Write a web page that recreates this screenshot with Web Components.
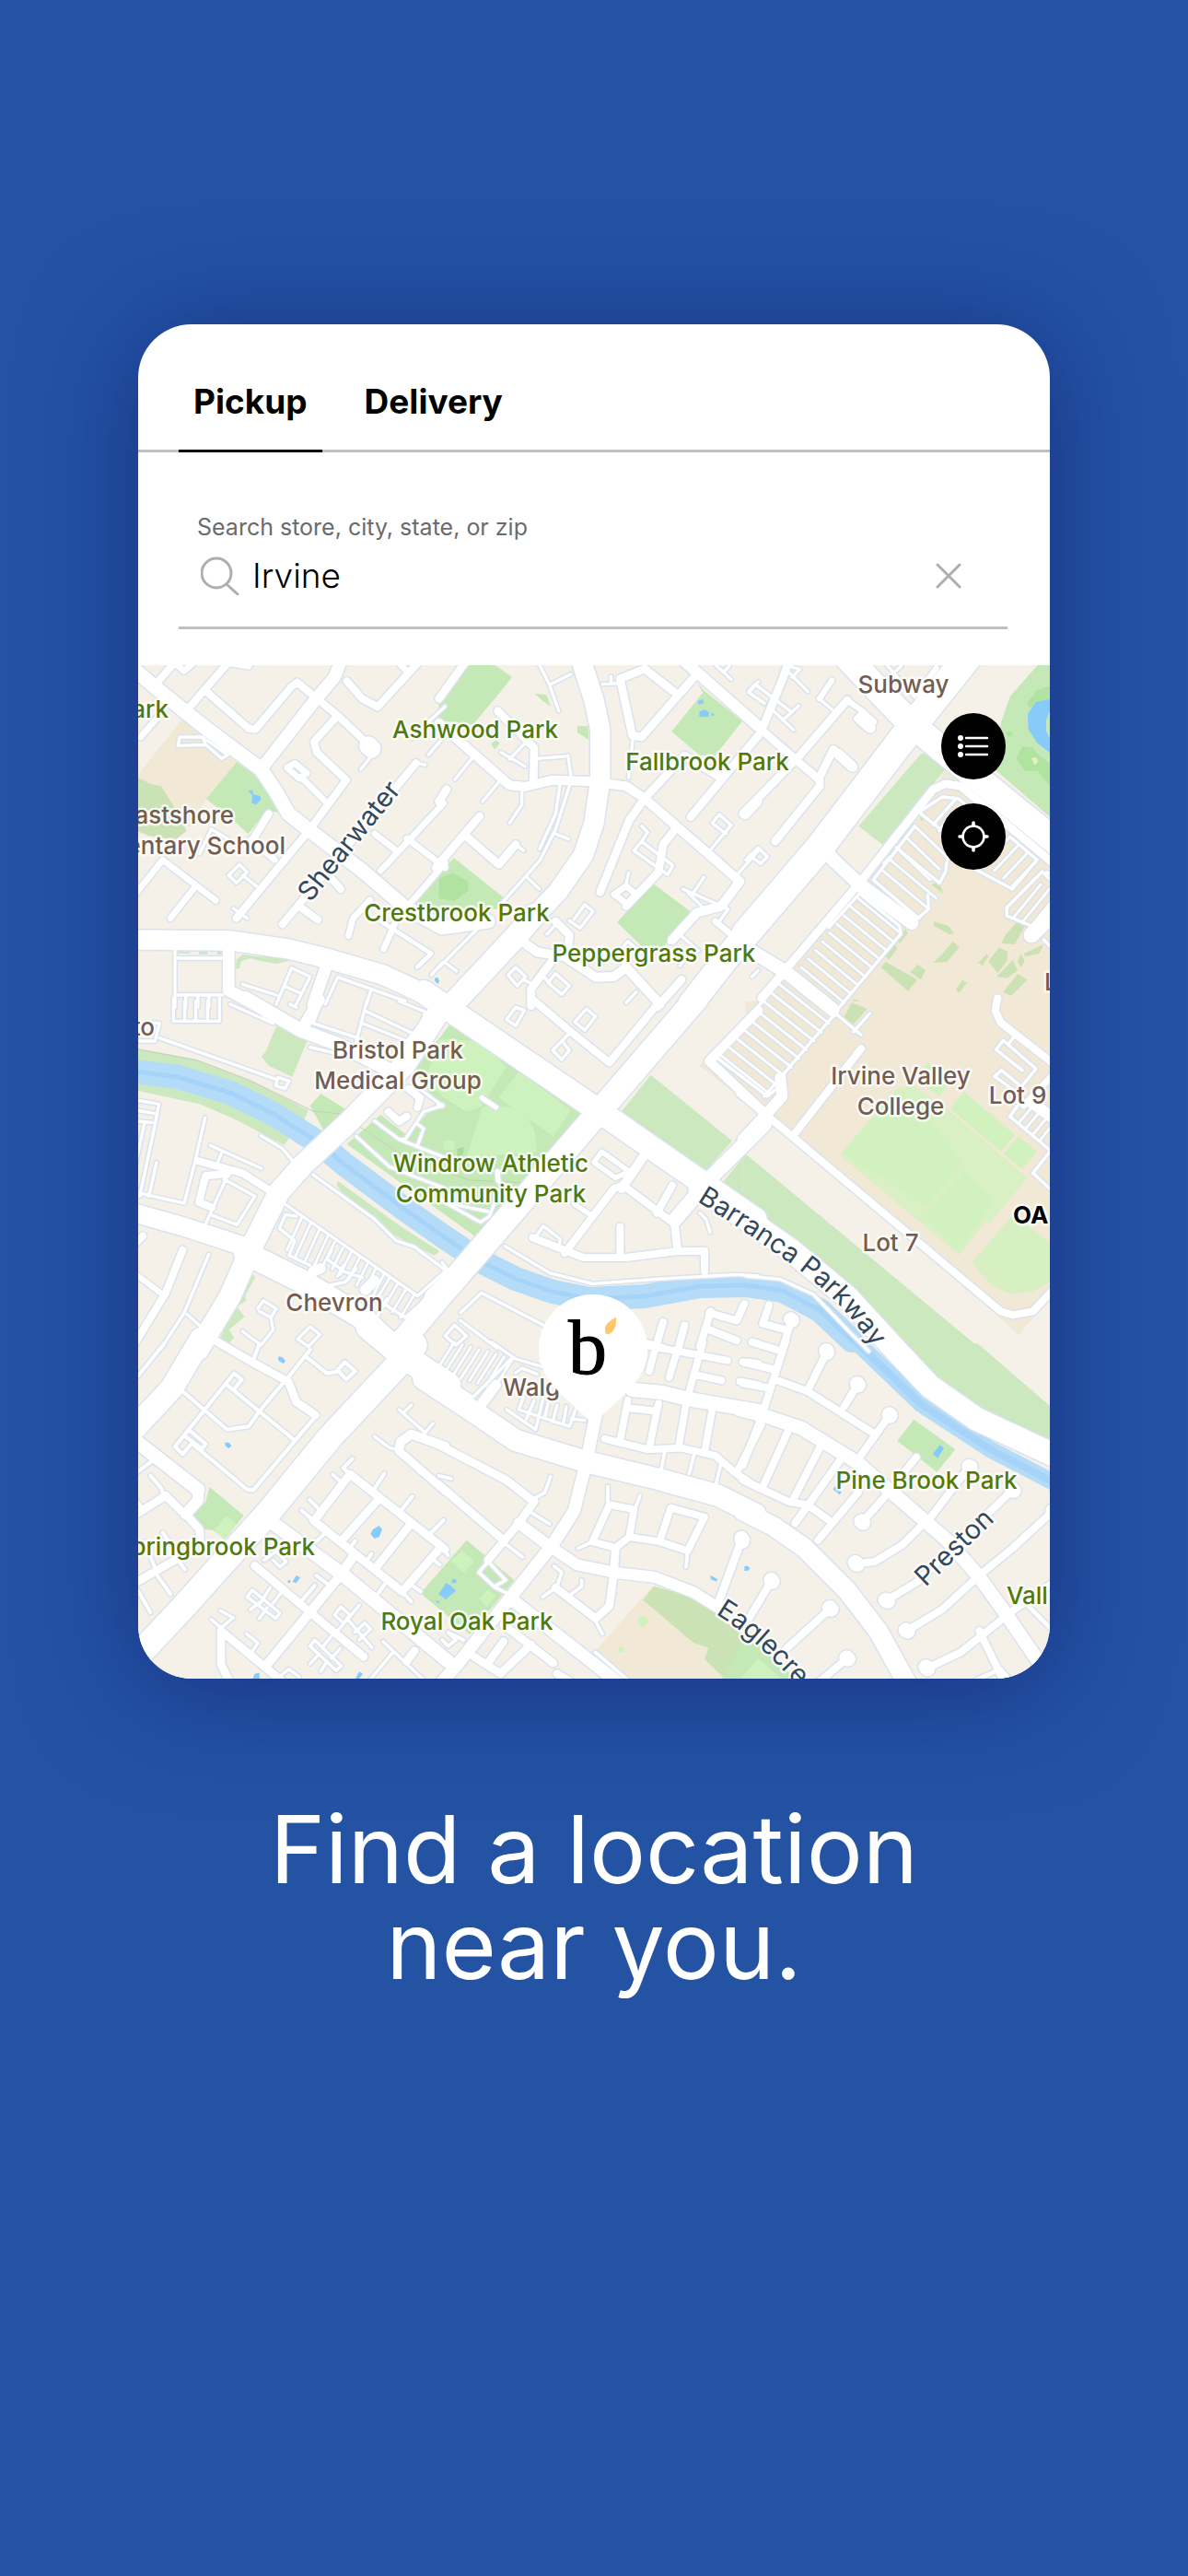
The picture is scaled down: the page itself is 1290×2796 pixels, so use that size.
<!DOCTYPE html>
<html lang="en">
<head>
<meta charset="utf-8">
<meta name="viewport" content="width=device-width, initial-scale=1">
<title>Find a location near you</title>
<style>
  html { background: #2453a4; }
  body { margin: 0; font-family: Inter, "Open Sans", sans-serif; }
</style>
</head>
<body>
<promo-screen>
  <location-card>
    <mode-tabs selected="Pickup" modes="Pickup,Delivery"></mode-tabs>
    <place-search label="Search store, city, state, or zip" value="Irvine"></place-search>
    <store-map>
      <map-button slot="tools" label="Show list" icon="list"></map-button>
      <map-button slot="tools" label="Use my location" icon="locate"></map-button>
    </store-map>
  </location-card>
  <span slot="headline">Find a location<br>near you.</span>
</promo-screen>

<script>
// Survey sheets. Each sheet has its own origin on the map and is drawn at 3 units per pixel.
// land: [fill, path], roads: [width, path]
const SHEETS = [
  {
    x: 140, y: 720,
    land: [
      ['#f1e8d6', 'M175 180 350 322 250 445 200 530 0 560 0 400z'],
      ['#cbe2b4', 'M20 368 70 392 105 400 140 455 188 545 150 575 60 560 20 540z'],
      ['#c5e8b7', 'M350 322 430 375 460 415 492 487 450 480 388 555 340 510 252 442z'],
      ['#87cbfb', 'M388 415 403 413 405 427 428 432 430 443 415 460 400 455 402 430z'],
      ['#c5e8b7', 'M1020 680 970 735 930 790 1020 800zM1010 150 1030 130 1030 170z'],
      ['#b0e3a0', 'M1020 735 980 745 980 765 1020 770z'],
      ['#cce8bf', 'M348 995 350 965 370 948 420 955 470 955 525 968 480 978 430 970 395 960 365 970 360 992zM228 938h27v10h-27zM288 938h14v10h-14zM160 938h40v6h-40z'],
      ['#87cbfb', 'M996 1025 1005 1022 1012 1035 1006 1043 997 1036z']
    ],
    roads: [
      [46, 'M-30 -20 100 90 230 195 430 345 480 420 520 490 590 545 760 675 900 795 1020 860 1170 840'],
      [64, 'M-10 900 330 903 520 930 660 965 830 1015 1030 1108'],
      [40, 'M430 345 610 115 670 45 695 -20'],
      [24, 'M200 140 330 -10M90 65 155 -10M250 90 390 212 412 215 530 75 548 62 680 170 765 250M680 170 603 255 612 290 708 380 590 540M710 58 760 115 810 142 940 0M935 325 500 850M560 795 615 835M590 540 350 830M455 490 400 580M650 690 690 735'],
      [20, 'M870 -10 910 30M515 340 540 325 580 358 555 375zM560 370 645 455M110 640 10 765M110 640 283 772M210 735 135 830M395 575 475 640M800 555 865 605M1025 455 820 675M905 570 1030 665M1030 650 905 795M785 770 730 830 715 887M865 850 830 930M150 0 180 25 220 -10M90 180 38 240M330 0 390 10 400 -10'],
      [60, 'M780 268 790 278'],
      [10, 'M800 290 755 345M935 325 965 330M340 798 385 830M325 690 360 655 385 680 350 715zM370 690 415 725M975 298 1030 235M1030 140 960 205 920 245M165 240 240 240 322 298 302 310 250 265 160 268zM240 240 250 265M230 620 268 540 320 570M150 935V1120M155 960H305M150 1080H305M185 1080V1120M225 1080V1120M260 1080V1120M480 1110 530 992 590 1020 545 1110M505 1050 560 1075M370 1045 480 1080M640 1110 680 1022 900 1100M790 1060 770 1120M985 1015 1020 975'],
      [38, 'M325 930V1065L390 1100M645 980 600 1110'],
      [14, 'M820 840 985 945 940 988']
    ]
  },
  {
    x: 480, y: 720,
    land: [
      ['#c5e8b7', 'M85 0 165 0 228 45 180 105 100 200 -10 185 -10 130z'],
      ['#c5e8b7', 'M302 98 340 103 354 140 325 120zM441 205 475 205 478 250 441 225zM160 262 175 250 188 260 172 280z'],
      ['#c5e8b7', 'M832 65 855 90 978 188 890 300 840 300 748 222 850 95z'],
      ['#87cbfb', 'M833 122 850 117 853 130 835 134zM838 158 855 150 870 160 868 175 838 173zM877 160 890 168 877 172z'],
      ['#c5e8b7', 'M38 633 200 762 180 800 -90 795 -90 790z'],
      ['#b0e3a0', 'M-10 700 35 683 85 710 85 740 40 775 -10 765z'],
      ['#c5e8b7', 'M687 716 808 808 720 925 660 930 570 843z']
    ],
    roads: [
      [64, 'M450 -20 495 120 515 215 515 380 495 520 460 625 380 740 240 890'],
      [74, 'M300 820 240 890 20 1125'],
      [30, 'M-10 195 220 397 270 402 360 380 490 385 600 400 660 440 970 710 910 790 830 812 750 900M240 890 310 940 400 955 500 1022 560 1020 600 990 710 1110'],
      [26, 'M-10 115 80 -10M182 155 300 275 298 385M122 498 -20 665M75 560 185 655 240 590M15 410 -10 450M660 440 610 510 515 745M660 440 790 300 905 370M1030 235 810 500M1030 450 988 495M580 50 660 18 765 100M580 50 620 235 650 240 830 35M760 540 720 590 705 680 600 790M370 840 415 885 410 930M365 960 290 1060 290 1115M780 1030 700 1120'],
      [36, 'M780 -15 1030 205'],
      [20, 'M560 752 600 725 635 755 605 785zM890 840 938 880'],
      [10, 'M350 70 420 35M310 -10 350 70 380 155M310 310 400 303M410 300 422 380M192 290 270 335M270 260 220 312M105 300 42 378M190 380 132 450M260 410V460L220 520M385 390 370 490 318 604M415 400 370 540 320 640 200 775M370 555 412 572M275 695 317 735M240 590 266 610M523 68 575 65M550 42V65M622 240 608 372M880 -5 942 52M935 10 920 25M600 715 608 682M650 530 670 550 650 580 752 658 735 688 625 610 650 580M870 612 942 527 903 492 880 520 925 555M960 690 1030 610M785 735 932 800 900 845M853 697 820 745M845 790 800 745M740 910 770 880 835 935M775 985 800 950M342 882 370 850M430 833 465 785 492 808 450 862 415 838M590 975 580 935 605 905 635 930M130 850 -10 990M15 978 47 1002M240 990 272 1020 245 1050 215 1015zM265 1030 295 1045M370 1010 415 1050 390 1078 345 1040zM330 1020 350 1040M632 1070 600 1105M1030 60 1000 95 1020 110M1030 1000 1010 1020']
    ]
  },
  {
    x: 810, y: 720,
    land: [
      ['#f1e8d6', 'M650 345 740 405 990 600V1120H60L120 1000 620 400z'],
      ['#cce8bf', 'M570 295 605 293 650 345 445 590 367 530z'],
      ['#c5e8b7', 'M990 0 950 6 860 108 832 190 805 340 990 500z'],
      ['#b0e3a0', 'M990 75 950 85 915 130 925 145 990 120zM900 270 935 275 955 300 990 325V400L950 350 910 350 880 310zM850 222 868 222 866 238 850 236z'],
      ['#87cbfb', 'M990 117 945 125 918 165 920 215 950 260 990 292z'],
      ['#c5e8b7', 'M990 155 978 185 978 220 990 245z'],
      ['#e7efc0', 'M930 310 945 305 952 320 940 332z'],
      ['#cbe2b4', 'M612 840 660 855 678 880 662 882 612 855zM675 905 695 925 655 972 610 975 640 945zM520 865 527 880 500 912 490 900zM485 915 492 930 465 965 455 955zM455 972 558 1030 528 1068 440 990zM560 980 585 1000 570 1030 535 1005zM705 1032 720 1040 695 1072 683 1062zM785 945 790 955 770 985 757 975zM825 925 853 940 850 970 820 1008 790 970zM880 845 912 850 875 915 832 912 845 885zM970 915 955 945 910 955 905 945zM895 945 908 970 895 990 885 970zM870 965 885 1000 850 1025 817 1020zM885 1012 917 1030 865 1082 838 1070zM630 710 642 750 605 720zM565 500 580 505 573 515zM350 1093 382 1105 345 1115z']
    ],
    roads: [
      [92, 'M730 -30 530 220 240 600 0 880'],
      [82, 'M0 880 -180 1110'],
      [84, 'M310 -40 530 190 620 265 1020 590'],
      [26, 'M50 1090 370 715 610 410 650 392 700 400 1000 650M140 -10 120 50 50 220M-10 165 240 380 240 400 95 580M-10 490 175 300 330 120M240 370 285 280 350 340'],
      [44, 'M240 590 290 645 370 720 540 845M-10 920 130 1005 280 1125'],
      [34, 'M300 295 345 335M375 185 405 210'],
      [18, 'M330 120 385 160M360 180 400 215 418 190 380 158zM280 55 240 115M620 15 560 100'],
      [10, 'M10 90 30 68 150 160M10 95 60 130M172 138 120 185M85 150 155 217M235 112 280 150M140 30 202 92M145 10 175 20 150 45M0 640 40 600 70 630 48 652 12 625M450 -5 550 110M505 10 465 45M270 860 370 750 500 855 505 880 300 1125M415 705 550 530M415 705 560 830 595 800 592 755M545 840 560 830M450 650 470 630M490 600 630 715 650 680 655 640M570 480 640 435 690 440 710 455M570 490 640 545M610 525 685 440M630 545 660 500M750 672 868 735 948 640 860 565M850 822 930 855 M850 822V795L965 678 1000 712M980 680 1000 690M970 900 1000 930'],
      [50, 'M930 885 1000 815']
    ],
    hatch: [
      [180, 990, 365, 765, 140, 115, 9],
      [415, 705, 470, 640, 150, 125, 3],
      [490, 600, 550, 530, 110, 105, 3],
      [860, 565, 948, 640, -80, 85, 4],
      [870, 830, 930, 855, 90, -110, 3]
    ]
  },
  {
    x: 140, y: 1090,
    land: [
      ['#cce8bf', 'M20 143 210 178 400 250 585 345 570 375 505 458 450 430 340 372 230 325 20 280z'],
      ['#cce8bf', 'M485 60 580 120 532 236 455 200 432 170 445 155z'],
      ['#c5e8b7', 'M625 292 728 355 645 430 590 330z'],
      ['#cce8bf', 'M680 575 880 720 1012 805 995 818 860 750 720 650 678 590z'],
      ['#cce8bf', 'M395 872 412 888 378 950 383 965 352 985 377 1018 325 1060 343 1085 325 1105 298 1085z']
    ],
    roads: [
      [70, 'M1000 40 900 195 720 380 570 520 490 610 400 790 330 950 225 1125'],
      [60, 'M-10 672 180 725 380 790'],
      [76, 'M380 810 560 900 760 1020 890 1150M1040 920 880 1110'],
      [44, 'M380 -20 560 85 680 130 850 215'],
      [36, 'M570 70 620 -15'],
      [24, 'M225 510 370 550 480 620M320 553 250 558 228 645 270 662M175 800 120 940 10 1120M910 275 948 305 940 335M845 350 880 382 905 365M20 780 45 755'],
      [18, 'M10 870 110 945'],
      [34, 'M600 870 625 860M770 930 800 900'],
      [10, 'M248 370 215 515 180 648 20 612M265 460 432 535M302 485 285 525M20 312 98 325 75 440 35 625M20 345 82 355M20 380 75 385M50 390 20 530M90 515 65 625M430 428 500 470 548 527M320 560 250 715M310 570 410 625 352 718 265 685M600 555 800 700 870 770 930 790 1030 865M500 645 940 950 1030 870M545 690 510 685 490 730 540 770 522 818 590 850M590 140 800 190 835 225M740 320 800 262M800 380 880 440 900 440 960 350 1020 330 940 270M880 440 1030 500M940 460 960 405 940 390M740 430 850 530 1030 600M600 62 628 -10M600 62 745 110M775 -10 740 125M770 22 925 95M755 60 905 120M880 -10 965 25 955 60 905 120M330 0 470 62M440 40 462 18M145 -20V55H295V-20M182 -10V55M218 -10V55M256 -10V55M35 120 85 120 100 62 60 60M100 110 480 245M485 238 522 250 508 275 478 265zM260 815 180 1005 105 1120M190 1010 240 1055M420 990 438 965 480 992 462 1020 425 1000M462 1020 470 1060 430 1110 370 1065M590 1050 622 1075 585 1115 550 1090zM655 915 705 905 740 860M660 800 645 830 700 870 760 890M680 885 700 850M830 975 900 1020 940 985M810 1015 840 960M525 0 545 10']
    ],
    hatch: [
      [565, 690, 650, 750, -50, 110, 4],
      [670, 775, 830, 880, -35, 70, 7],
      [850, 890, 930, 945, -45, 75, 4]
    ]
  },
  {
    x: 480, y: 1090,
    land: [
      ['#c5e8b7', 'M30 60 460 355 120 765 -310 455 -200 360 -110 430 -20 320 -90 215z'],
      ['#cef2bd', 'M-10 115 130 120 210 205 125 335 80 350 0 300 -50 230zM250 220 420 345 362 430 185 305zM130 335 Q310 310 308 480 L80 500zM5 445h35v30H5z'],
      ['#a8dd98', 'M50 470 72 465 68 490 48 500z'],
      ['#f1e8d6', 'M1030 0 900 130 838 200 1030 350z'],
      ['#cce8bf', 'M680 230 945 445 862 540 835 535 583 352zM990 488 1020 505V680L905 592z']
    ],
    roads: [
      [76, 'M-60 -40 500 340 860 590 1020 700'],
      [78, 'M830 -20 520 340 270 630 20 920 -20 960'],
      [24, 'M290 -20 420 90 545 190 710 -10M400 810 560 600 590 590 750 710M700 680 750 590M295 760 460 825 600 825 760 805 855 803V870M580 725V820M870 1005 960 1030 985 975M875 1000 840 1115M870 1060 960 1095M720 1035 695 1120M790 1045 770 1120'],
      [30, 'M585 600 660 490M1030 20 870 185 1040 345'],
      [48, 'M760 700 880 560 1050 390'],
      [26, 'M757 710 767 800M650 1100 720 1120'],
      [16, 'M495 515 520 480 610 545 565 565zM430 650 490 690M130 305 175 335M-10 330 0 330M180 545 183 575'],
      [10, 'M412 98 360 150 390 180 415 150 395 125M240 10 210 50 240 70 268 20zM470 15 500 40 465 85 432 58zM310 750 330 722 385 765 380 790M840 680 860 700 873 742M205 788 350 875 490 910 700 895 960 880 1030 885M60 1005 128 940 330 1045M60 1030 180 1120M0 640 125 710 155 690 170 650M30 650 150 675M0 840 30 880M10 1080 40 1045 80 1080 45 1110z']
    ]
  },
  {
    x: 810, y: 1090,
    land: [
      ['#f1e8d6', 'M0 -10H990V925L935 1020 888 1077 820 1015 70 370 -10 300z'],
      ['#cbe2b4', 'M345 -5 395 15 350 65 318 45z'],
      ['#f5f0e8', 'M70 375 820 1015 888 1077 935 1020 990 960V1120H485L-10 650V480z'],
      ['#cce8bf', 'M-10 480 750 1110H485L330 930 130 760-10 640z'],
      ['#f1e8d6', 'M820 1005 888 1077 945 1010z'],
      ['#d8f0c3', 'M305 490 490 275 545 265 660 345 917 565 795 712 780 708 695 817z'],
      ['#d1f2bf', 'M310 487 490 285 600 380 705 515 585 657 480 585zM712 545 808 638 690 800 582 688zM710 285 877 425 830 480 665 340zM888 430 947 480 900 537 838 488zM590 188 662 260 630 300 560 250z'],
      ['#d6f0c2', 'M870 685 990 775V905L930 937 862 943 800 915 760 870 737 840z']
    ],
    roads: [
      [24, 'M-20 290 150 430 830 1000 870 1012 935 1000 1010 920M160 420 375 145M820 -20 812 20 830 60 1010 200'],
      [36, 'M112 240 118 300 60 365 -10 440M250 -15 285 25M930 320 1000 370'],
      [24, 'M75 980 55 1040 130 1060M145 1040 120 1120M20 1100 100 1125'],
      [44, 'M145 1025 152 1030'],
      [10, 'M-100 170 140 -110M70 300 100 275M-100 170 70 300M300 20 60 300M280 20 375 100M403 30 350 90M815 148 838 118 945 210 880 290M815 148 900 215M870 110 855 130M810 235 832 215 900 270M810 235 880 285M860 365 990 475M860 365 900 310M935 550 990 480M935 550 1000 610M0 885 110 895 220 945 340 1070 400 1130'],
      [20, 'M1000 230 905 330']
    ],
    hatch: [
      [-90, 160, 130, -95, 165, 130, 10],
      [890, 385, 960, 440, 50, -60, 4]
    ]
  },
  {
    x: 140, y: 1460,
    land: [
      ['#c5e8b7', 'M263 462 374 555 312 632 275 602 245 600 210 552 250 510z'],
      ['#cef2bd', 'M318 555 350 583 310 632 278 600z'],
      ['#87cbfb', 'M487 37 500 40 510 52 503 60 487 50zM313 317 325 317 335 328 325 337 314 328zM795 600 815 588 825 600 815 625 800 630 787 615zM545 750 558 757 545 775 533 770zM518 766h8v8h-8zM410 1070 425 1067 425 1090H402zM750 1063 762 1070 750 1087H738z']
    ],
    roads: [
      [74, 'M235 -20 140 140 0 290'],
      [82, 'M930 0 880 60 655 300 450 550 180 850 30 1010M780 -60 900 40 1040 130'],
      [44, 'M20 310 225 470 M470 580 700 750 1040 1030'],
      [36, 'M225 470 225 505 185 550'],
      [26, 'M280 -15 410 60 520 120 545 185 608 228M185 550 230 600 232 640M10 560 120 490 170 540M410 718 590 870 765 1015M600 570 890 803M605 570 720 420 1030 665M690 640 815 500M800 730 920 580M890 803 1010 665M300 930 300 1040 335 1110M300 930 500 1095M930 995 905 1030M880 345 1030 475M10 780 150 700'],
      [30, 'M450 1040 680 760 730 690M880 340 885 315 920 290 1030 330'],
      [12, 'M425 -5 405 50M590 15 515 110M580 40 645 92 685 85M703 55 737 85 708 112 680 82zM505 120 425 215 390 265 320 275 178 153M320 130 540 310M345 140 368 112 342 92 320 120 150 330 175 355 205 320 385 470 405 472 610 230M195 275 250 322 238 338 185 298M115 -5 30 100M70 425 105 465 115 500M25 415 85 370M20 500 50 540M85 740 135 810M30 800 70 870M50 640 85 725M110 610 130 640M160 700 182 730M720 420 698 400 728 370M798 470 832 418M885 540 923 493M615 530 588 503M600 570 562 538M700 455 665 422M1025 570 970 625M980 690 1012 715M715 665 737 638M770 710 790 680M832 780 812 808M890 803 920 835M920 780 950 802M610 640 637 615M650 780 610 750M565 830 605 783'],
      [10, 'M880 210 965 285 990 255M900 215 920 195M800 298 850 335 880 340M960 35 1030 85M385 820 402 798 492 872 478 890zM440 700 480 672 512 705 492 722 470 700M460 790 425 845M395 862 425 838M425 890 450 855M497 805 470 840M590 980 605 960 692 1045 675 1060zM657 950 630 985M688 988 660 1020M590 1038 620 1005M625 1062 645 1030M670 880 690 852 720 878 700 905zM750 847 680 930M710 890 792 985M735 935 768 905 787 925 750 960M268 893 300 920 340 888 298 865M383 940 420 970 400 1000M490 1080 520 1055 555 1080M828 965 960 1090M860 1000 785 1090']
    ]
  },
  {
    x: 480, y: 1460,
    land: [
      ['#c5e8b7', 'M80 635 235 765 90 942 -70 808z'],
      ['#cef2bd', 'M65 668 105 705 70 742 30 702zM150 795 175 817 145 852 120 825zM50 862 80 890 85 920 55 915z'],
      ['#87cbfb', 'M12 775 28 782 45 800 30 812 12 828 -12 810 0 795zM32 763h14v12h-14zM-20 830 -8 835 -14 842zM875 750 897 762 895 770 875 762zM990 718 1002 724 995 735 987 730z'],
      ['#f1e8d6', 'M685 785 1000 970 915 1090H600L500 995z'],
      ['#cbe2b4', 'M690 785 820 820 1010 965 915 1080 855 1022 868 985 820 970 655 830z'],
      ['#c5e8b7', 'M1000 975 1030 950V1090H912z'],
      ['#cef2bd', 'M655 878 675 897 655 920 635 898zM575 985h16v14h-16zM1030 1030V1090H975z']
    ],
    roads: [
      [70, 'M-60 110 100 215 240 310 470 380 700 435 900 490 1020 550'],
      [46, 'M620 145 720 155 800 175 1030 215'],
      [40, 'M515 160 470 380 430 540 360 650 200 850 50 1040 -20 1120M230 830 600 1120'],
      [36, 'M250 580 350 655 440 715 560 740 690 755 820 805 900 855'],
      [26, 'M-10 325 210 440 300 510 250 580 150 700M-10 455 200 635M560 740 545 850 500 890 370 790M565 660 560 740M975 635 900 840M200 910 362 1035M200 965 150 1035M105 1015 190 1070 290 975M375 1070 440 1110'],
      [23, 'M675 85 700 -10M740 105 768 10M610 -10 930 50M820 95 910 115M850 -10 800 170M995 55 1030 60M970 118 1030 130M605 180 580 310M705 190 675 335M795 190 770 335M880 210 855 350M610 205 700 215M530 305 670 340 780 335 890 360 960 420 1030 465M1040 260 960 415M490 640 545 520 625 535 610 625 565 660zM610 625 710 640 800 670 855 560 745 530 710 635'],
      [46, 'M975 628 978 640'],
      [34, 'M175 130 130 190'],
      [11, 'M725 350 715 402M820 360 805 418M907 390 893 452M353 428 335 480 300 500M290 545 350 582M210 650 262 690M150 705 120 740 170 787 207 765 150 705M170 787 235 820M370 790 328 820M375 785 390 740 365 720M415 815 455 785V765M495 890 522 940M540 460V520M645 490 628 535M800 670 795 722M490 640 443 662M500 1000 610 1095M-10 425 30 435M0 660 20 685M20 935 45 960 20 980 0 960M30 940 70 960'],
      [10, 'M-10 95 70 150 100 170 230 40M160 -10 240 45 410 95M240 90 260 75 310 95M210 210 305 275 330 170M265 170 250 210 415 265 435 210M300 180 275 240M345 190 335 235M375 195 360 250M405 200 395 258M420 240 465 245']
    ],
    hatch: [
      [40, -10, 230, 45, -60, 95, 8]
    ]
  },
  {
    x: 810, y: 1460,
    land: [
      ['#cce8bf', 'M505 -5H755L990 198V322L730 182 600 85z'],
      ['#c5e8b7', 'M547 242 682 340 622 413 493 312z'],
      ['#87cbfb', 'M632 325 645 335 625 368 608 355zM290 460 312 478 305 487 284 470zM-5 720 12 724 10 733-5 735z'],
      ['#c5e8b7', 'M-10 965 40 950 160 1090H-80z'],
      ['#cef2bd', 'M40 1020 120 1090H-20z']
    ],
    roads: [
      [62, 'M-10 540 90 590 190 660 330 800 430 930 530 1110'],
      [44, 'M-20 210 60 230 180 270 360 380 580 570 660 640 760 755 850 880 980 1070'],
      [24, 'M-10 55 85 78M-10 125 75 140M130 -15 50 235 -10 390M90 110 200 150 420 290M200 150 262 25M320 200 363 130M360 380 468 228M555 365 510 420M595 570 728 395M460 485 380 575M570 590 510 650 420 705 358 712M870 470 560 770 460 830M1000 540 870 660 760 750 640 860 525 930M850 880 700 1000 590 1052M1000 775 840 885M760 930 830 1075M135 285 60 450M240 335 150 510M310 370 160 580M365 480 235 635M-10 440 140 510 200 520 270 570M85 765 10 890M275 858 130 990M330 1020 240 1095M-20 640 0 630'],
      [48, 'M262 18 264 24M363 126 366 130M467 226 470 230M727 395 731 398M376 574 381 578M356 708 362 714M455 830 462 834M866 468 872 474M521 928 527 932M586 1048 592 1054M82 765 86 770M273 855 278 860M328 1018 333 1022M1000 540 1005 550'],
      [14, 'M920 850 1000 930M750 1090 830 1055 860 1090']
    ]
  }
];

const CANAL = 'M140 1162 193 1169 250 1186 297 1209 347 1241 373 1263 440 1313 480 1341 520 1368 560 1388 600 1402 640 1410 700 1407 760 1396 810 1395 850 1401 890 1422 925 1455';
const CANAL_EAST = 'M890 1420 925 1452 1000 1524 1075 1573 1150 1612';
const BARRANCA = 'M760 1290 810 1323 860 1358 920 1408 975 1468 1010 1505 1060 1540 1150 1582';
const BARRANCA_LABEL = 'M757 1304 Q803 1332 862 1374 T956 1476';
const EAGLECREST_LABEL = 'M777 1752 Q822 1778 880 1846';

// [text, x, baseline, anchor, kind]
const LABELS = [
  ['ark', 183, 779, 'end', 'park'],
  ['Ashwood Park', 516, 801, 'middle', 'park'],
  ['Fallbrook Park', 768, 836, 'middle', 'park'],
  ['Crestbrook Park', 496, 1000, 'middle', 'park'],
  ['Peppergrass Park', 710, 1044, 'middle', 'park'],
  ['Windrow Athletic', 533, 1272, 'middle', 'park'],
  ['Community Park', 533, 1305, 'middle', 'park'],
  ['Pine Brook Park', 1006, 1616, 'middle', 'park'],
  ['pringbrook Park', 342, 1688, 'end', 'park'],
  ['Royal Oak Park', 507, 1769, 'middle', 'park'],
  ['Vall', 1093, 1741, 'start', 'park'],
  ['Subway', 981, 752, 'middle', 'poi'],
  ['astshore', 254, 894, 'end', 'poi'],
  ['entary School', 310, 927, 'end', 'poi'],
  ['to', 168, 1124, 'end', 'poi'],
  ['Bristol Park', 432, 1149, 'middle', 'poi'],
  ['Medical Group', 432, 1182, 'middle', 'poi'],
  ['Irvine Valley', 978, 1177, 'middle', 'poi'],
  ['College', 978, 1210, 'middle', 'poi'],
  ['Lot 9', 1105, 1198, 'middle', 'poi'],
  ['Lot 7', 967, 1358, 'middle', 'poi'],
  ['L', 1134, 1075, 'start', 'poi'],
  ['Chevron', 363, 1423, 'middle', 'poi'],
  ['Walg', 546, 1515, 'start', 'poi'],
  ['OA', 1100, 1328, 'start', 'city']
];

const hatchPath = ([x1, y1, x2, y2, dx, dy, n]) => {
  let d = '';
  for (let i = 0; i < n; i++) {
    const t = i / (n - 1);
    d += `M${Math.round(x1 + (x2 - x1) * t)} ${Math.round(y1 + (y2 - y1) * t)}l${dx} ${dy}`;
  }
  return d;
};

const onSheet = (sheet, content) =>
  `<g transform="translate(${sheet.x} ${sheet.y}) scale(${1 / 3})">${content}</g>`;

const landLayer = () => SHEETS.map(s =>
  onSheet(s, s.land.map(([fill, d]) => `<path fill="${fill}" d="${d}"/>`).join(''))).join('');

const roadLayer = (extra) => SHEETS.map(s => {
  const roads = s.roads.map(([w, d]) => `<path stroke-width="${w + extra}" d="${d}"/>`);
  (s.hatch || []).forEach(h => roads.push(`<path stroke-width="${8 + extra}" d="${hatchPath(h)}"/>`));
  return onSheet(s, roads.join(''));
}).join('');

const ICONS = {
  list: `<svg viewBox="0 0 34 24" width="34" height="24" fill="#fff" aria-hidden="true">
    <circle cx="3" cy="3" r="3"/><circle cx="3" cy="12" r="3"/><circle cx="3" cy="21" r="3"/>
    <path d="M9 3h23M9 12h23M9 21h23" stroke="#fff" stroke-width="2.4" stroke-linecap="round"/></svg>`,
  locate: `<svg viewBox="0 0 34 34" width="34" height="34" fill="none" stroke="#fff" aria-hidden="true">
    <circle cx="17" cy="17" r="11.5" stroke-width="2.6"/>
    <path d="M17 2V5M17 29v3M2 17H5M29 17h3" stroke-width="3.6" stroke-linecap="round"/></svg>`
};

class PromoScreen extends HTMLElement {
  constructor() {
    super();
    this.attachShadow({ mode: 'open' }).innerHTML = `
      <style>
        :host {
          display: flex;
          flex-direction: column;
          min-height: 100vh;
          box-sizing: border-box;
          padding: 352px 150px 0;
          background: #2453a4;
        }
        h1 {
          margin: 133px 0 0;
          color: #fff;
          font-size: 102px;
          line-height: 104px;
          font-weight: 400;
          text-align: center;
        }
      </style>
      <main><slot></slot></main>
      <h1><slot name="headline"></slot></h1>`;
  }
}

class LocationCard extends HTMLElement {
  constructor() {
    super();
    this.attachShadow({ mode: 'open' }).innerHTML = `
      <style>
        :host {
          display: flex;
          flex-direction: column;
          overflow: hidden;
          border-radius: 58px;
          background: #fff;
          box-shadow: 0 10px 120px rgba(18, 26, 112, .6);
        }
      </style>
      <slot></slot>`;
  }
}

class ModeTabs extends HTMLElement {
  constructor() {
    super();
    this.attachShadow({ mode: 'open' });
  }

  connectedCallback() {
    this.render();
  }

  render() {
    const selected = this.getAttribute('selected');
    const modes = this.getAttribute('modes').split(',');
    this.shadowRoot.innerHTML = `
      <style>
        :host {
          display: block;
          padding: 32px 44px 0;
          border-bottom: 3px solid #c0c0c0;
        }
        div { display: flex; gap: 30px; }
        button {
          height: 104px;
          margin: 0 0 -3px;
          padding: 0 16px;
          box-sizing: content-box;
          border: 0;
          border-bottom: 3px solid transparent;
          background: none;
          color: #000;
          font: 700 37px/104px Inter, sans-serif;
        }
        button[aria-selected="true"] { border-color: #000; }
      </style>
      <div role="tablist">
        ${modes.map(m => `<button type="button" role="tab" aria-selected="${m === selected}">${m}</button>`).join('')}
      </div>`;
    this.shadowRoot.querySelectorAll('button').forEach(button => {
      button.addEventListener('click', () => {
        this.setAttribute('selected', button.textContent);
        this.render();
      });
    });
  }
}

class PlaceSearch extends HTMLElement {
  constructor() {
    super();
    this.attachShadow({ mode: 'open' });
  }

  connectedCallback() {
    this.shadowRoot.innerHTML = `
      <style>
        :host {
          display: block;
          margin: 64px 46px 39px 44px;
          border-bottom: 3px solid #c0c0c0;
        }
        label {
          display: block;
          padding-left: 20px;
          color: #6b6b6b;
          font-size: 25px;
          line-height: 34px;
        }
        .row {
          display: flex;
          align-items: center;
          height: 72px;
          margin-bottom: 19px;
          padding: 0 46px 0 24px;
        }
        input {
          flex: 1;
          min-width: 0;
          height: 56px;
          margin-left: 14px;
          padding: 0;
          border: 0;
          outline: 0;
          background: none;
          color: #000;
          font: 300 37px/56px Inter, sans-serif;
        }
        button {
          display: flex;
          padding: 4px;
          border: 0;
          background: none;
        }
        svg {
          fill: none;
          stroke: #aeaeae;
          stroke-width: 3;
          stroke-linecap: round;
        }
      </style>
      <label for="place">${this.getAttribute('label')}</label>
      <div class="row">
        <svg viewBox="0 0 42 42" width="42" height="42" aria-hidden="true"><circle cx="17" cy="18" r="16"/><path d="M28 30l12 11"/></svg>
        <input id="place" type="text" value="${this.getAttribute('value')}">
        <button type="button" aria-label="Clear search"><svg viewBox="0 0 28 28" width="28" height="28"><path d="M2 2l24 24M26 2L2 26"/></svg></button>
      </div>`;
    const input = this.shadowRoot.querySelector('input');
    this.shadowRoot.querySelector('button').addEventListener('click', () => {
      input.value = '';
      input.focus();
    });
  }
}

class MapButton extends HTMLElement {
  constructor() {
    super();
    this.attachShadow({ mode: 'open' });
  }

  connectedCallback() {
    this.shadowRoot.innerHTML = `
      <style>
        :host { display: block; }
        button {
          display: flex;
          align-items: center;
          justify-content: center;
          width: 70px;
          height: 72px;
          padding: 0;
          border: 0;
          border-radius: 50%;
          background: #000;
        }
      </style>
      <button type="button" aria-label="${this.getAttribute('label')}">${ICONS[this.getAttribute('icon')]}</button>`;
  }
}

class StoreMap extends HTMLElement {
  constructor() {
    super();
    this.attachShadow({ mode: 'open' }).innerHTML = `
      <style>
        :host {
          display: block;
          position: relative;
          background: #f5f0e8;
        }
        svg { display: block; width: 100%; height: auto; }
        .line { fill: none; stroke-linecap: round; stroke-linejoin: round; }
        .label {
          font-family: Inter, sans-serif;
          font-size: 26px;
          font-weight: 500;
          paint-order: stroke;
          stroke: #fffc;
          stroke-width: 5px;
          stroke-linejoin: round;
        }
        .park { fill: #4f7a0e; }
        .poi { fill: #735c50; }
        .city { fill: #000; font-weight: 700; }
        .street { fill: #34485a; font-weight: 400; font-size: 29px; }
        .brand { font: 84px "Liberation Serif", serif; stroke: #000; stroke-width: 1px; }
        .tools {
          position: absolute;
          top: 52px;
          right: 48px;
          display: flex;
          flex-direction: column;
          gap: 26px;
        }
      </style>
      <svg viewBox="150 722 990 1100" role="img" aria-label="Map of Irvine">
        <defs>
          <path id="barranca" d="${BARRANCA_LABEL}"/>
          <path id="eaglecrest" d="${EAGLECREST_LABEL}"/>
        </defs>
        ${landLayer()}
        <g class="line">
          <path stroke="#b4dcf8" stroke-width="26" d="${CANAL}"/>
          <path stroke="#b4dcf8" stroke-width="18" d="${CANAL_EAST}"/>
          <path stroke="#a6d4f9" stroke-width="5" d="${CANAL}"/>
          <path stroke="#a6d4f9" stroke-width="8" d="${CANAL_EAST}"/>
          <path stroke="#c4cdb8" stroke-width="1" stroke-dasharray="2 1" d="M150 1139 215 1151 270 1172 340 1206 370 1209 395 1226 440 1256 510 1281 575 1284"/>
        </g>
        <g class="line" stroke="#dae3ed">${roadLayer(9)}<path stroke-width="28" d="${BARRANCA}"/></g>
        <g class="line" stroke="#fff">${roadLayer(0)}<path stroke-width="25" d="${BARRANCA}"/></g>
        ${LABELS.map(([text, x, y, anchor, kind]) =>
          `<text class="label ${kind}" x="${x}" y="${y}" text-anchor="${anchor}">${text}</text>`).join('')}
        <text class="label street" transform="translate(337 980) rotate(-51)">Shearwater</text>
        <text class="label street" transform="translate(1005 1723) rotate(-44)">Preston</text>
        <text class="label street"><textPath href="#barranca">Barranca Parkway</textPath></text>
        <text class="label street"><textPath href="#eaglecrest">Eaglecre</textPath></text>
        <path fill="#fff" d="M585 1464a59 59 0 0 1 118 0c0 36-30 52-59 82c-29-30-59-46-59-82z"/>
        <text class="brand" x="617" y="1491">b</text>
        <path fill="#ffc66d" d="M669 1430c-9 4-13 9-12 15q1 4 4 3c5-2 9-8 8-18z"/>
      </svg>
      <div class="tools"><slot name="tools"></slot></div>`;
  }
}

customElements.define('promo-screen', PromoScreen);
customElements.define('location-card', LocationCard);
customElements.define('mode-tabs', ModeTabs);
customElements.define('place-search', PlaceSearch);
customElements.define('map-button', MapButton);
customElements.define('store-map', StoreMap);
</script>
</body>
</html>
